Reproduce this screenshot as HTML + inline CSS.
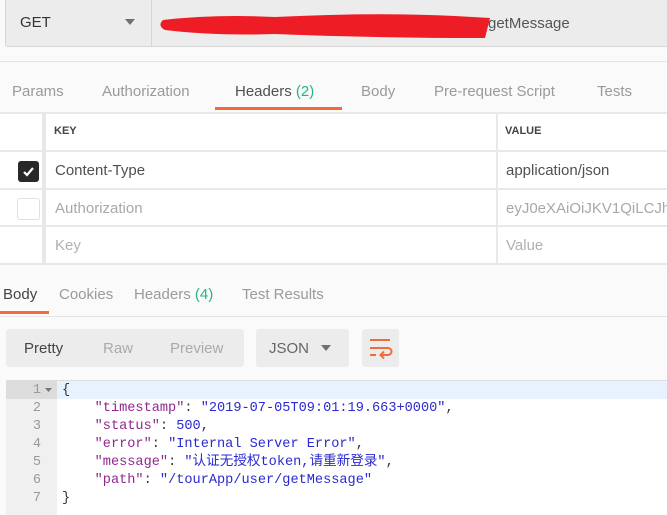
<!DOCTYPE html>
<html><head><meta charset="utf-8"><style>
*{margin:0;padding:0;box-sizing:border-box}
body{width:667px;height:515px;overflow:hidden;background:#fafafa;font-family:"Liberation Sans","Noto Sans CJK SC",sans-serif;position:relative;color:#505050}
.a{position:absolute;white-space:nowrap}
pre.a{white-space:pre}
</style></head><body>
<div class="a" style="left:5px;top:0;width:670px;height:47px;background:#ececec;border:1px solid #d6d6d6;border-top:none;border-radius:0 0 0 3px"></div>
<div class="a" style="left:151px;top:0;width:1px;height:47px;background:#d6d6d6"></div>
<div class="a" style="left:20px;top:14px;font-size:15px;color:#333">GET</div>
<svg class="a" style="left:125px;top:19px" width="10" height="7"><path d="M0 0H10L5 6Z" fill="#707070"/></svg>
<svg class="a" style="left:155px;top:8px" width="340" height="34"><path d="M8 12 Q60 6 120 9 Q220 4 300 8 L335 10 L330 30 Q220 30 120 26 Q60 28 10 22 Q2 18 8 12Z" fill="#ee1c25"/></svg>
<div class="a" style="left:488px;top:15px;font-size:15px;color:#555">getMessage</div>
<div class="a" style="left:0;top:61px;width:667px;height:1px;background:#e4e4e4"></div>
<div class="a" style="left:12px;top:83px;font-size:15px;color:#9a9a9a">Params</div>
<div class="a" style="left:102px;top:83px;font-size:15px;color:#9a9a9a">Authorization</div>
<div class="a" style="left:235px;top:83px;font-size:15px;color:#505050">Headers <span style="color:#26b47f">(2)</span></div>
<div class="a" style="left:361px;top:83px;font-size:15px;color:#9a9a9a">Body</div>
<div class="a" style="left:434px;top:83px;font-size:15px;color:#9a9a9a">Pre-request Script</div>
<div class="a" style="left:597px;top:83px;font-size:15px;color:#9a9a9a">Tests</div>
<div class="a" style="left:215px;top:107px;width:127px;height:3px;background:#f26b3a"></div>
<div class="a" style="left:0;top:112px;width:667px;height:152px;background:#fff"></div>
<div class="a" style="left:0;top:112px;width:667px;height:2px;background:#e8e8e8"></div>
<div class="a" style="left:0;top:150px;width:667px;height:2px;background:#e8e8e8"></div>
<div class="a" style="left:0;top:188px;width:667px;height:2px;background:#e8e8e8"></div>
<div class="a" style="left:0;top:225px;width:667px;height:2px;background:#e8e8e8"></div>
<div class="a" style="left:0;top:263px;width:667px;height:2px;background:#e8e8e8"></div>
<div class="a" style="left:42px;top:112px;width:4px;height:152px;background:#e8e8e8"></div>
<div class="a" style="left:496px;top:112px;width:2px;height:152px;background:#e8e8e8"></div>
<div class="a" style="left:54px;top:125px;font-size:11px;font-weight:bold;color:#444">KEY</div>
<div class="a" style="left:505px;top:125px;font-size:11px;font-weight:bold;color:#444">VALUE</div>
<div class="a" style="left:18px;top:161px;width:21px;height:21px;background:#282828;border-radius:3px"></div>
<svg class="a" style="left:21px;top:164px" width="15" height="15"><path d="M3 8L6 11L12 4" stroke="#fff" stroke-width="2.2" fill="none"/></svg>
<div class="a" style="left:17px;top:198px;width:23px;height:22px;border:1px solid #e0e0e0;border-radius:3px;background:#fff"></div>
<div class="a" style="left:55px;top:162px;font-size:15px;color:#505050">Content-Type</div>
<div class="a" style="left:506px;top:162px;font-size:15px;color:#505050">application/json</div>
<div class="a" style="left:55px;top:200px;font-size:15px;color:#a8a8a8">Authorization</div>
<div class="a" style="left:506px;top:200px;font-size:15px;color:#a8a8a8">eyJ0eXAiOiJKV1QiLCJhb</div>
<div class="a" style="left:55px;top:237px;font-size:15px;color:#b0b0b0">Key</div>
<div class="a" style="left:506px;top:237px;font-size:15px;color:#b0b0b0">Value</div>
<div class="a" style="left:3px;top:286px;font-size:15px;color:#444">Body</div>
<div class="a" style="left:59px;top:286px;font-size:15px;color:#9a9a9a">Cookies</div>
<div class="a" style="left:134px;top:286px;font-size:15px;color:#9a9a9a">Headers <span style="color:#26b47f">(4)</span></div>
<div class="a" style="left:242px;top:286px;font-size:15px;color:#9a9a9a">Test Results</div>
<div class="a" style="left:0;top:316px;width:667px;height:1px;background:#e4e4e4"></div>
<div class="a" style="left:0;top:311px;width:49px;height:3px;background:#f26b3a"></div>
<div class="a" style="left:6px;top:329px;width:238px;height:38px;background:#ececec;border-radius:3px"></div>
<div class="a" style="left:24px;top:340px;font-size:15px;color:#444">Pretty</div>
<div class="a" style="left:103px;top:340px;font-size:15px;color:#aaa">Raw</div>
<div class="a" style="left:170px;top:340px;font-size:15px;color:#aaa">Preview</div>
<div class="a" style="left:256px;top:329px;width:93px;height:38px;background:#ececec;border-radius:3px"></div>
<div class="a" style="left:269px;top:340px;font-size:15px;color:#666">JSON</div>
<svg class="a" style="left:321px;top:345px" width="10" height="7"><path d="M0 0H10L5 6Z" fill="#707070"/></svg>
<div class="a" style="left:362px;top:329px;width:37px;height:38px;background:#ececec;border-radius:3px"></div>
<svg class="a" style="left:368px;top:336px" width="26" height="24"><path d="M2 4H22M2 12H20A3.5 3.5 0 0 1 20 19H13M16 15.5L12.5 19L16 22.5M2 19H8" stroke="#f26b3a" stroke-width="2" fill="none"/></svg>
<div class="a" style="left:6px;top:380px;width:661px;height:135px;background:#fff;border-top:1px solid #ddd"></div>
<div class="a" style="left:6px;top:381px;width:51px;height:134px;background:#f0f0f0"></div>
<div class="a" style="left:6px;top:381px;width:51px;height:18px;background:#dcdcdc"></div>
<div class="a" style="left:57px;top:381px;width:610px;height:18px;background:#e8f2fe"></div>
<pre class="a" style="left:6px;top:382px;width:51px;font-family:'Liberation Mono',monospace;font-size:13.6px;line-height:18px;color:#999;text-align:right;padding-right:16px">1
2
3
4
5
6
7</pre>
<svg class="a" style="left:45px;top:388px" width="7" height="5"><path d="M0 0H7L3.5 4Z" fill="#777"/></svg>
<pre class="a" style="left:62px;top:382px;font-family:'Liberation Mono','Noto Sans CJK SC',monospace;font-size:13.6px;line-height:18px;color:#333">{
    <span style="color:#92278f">"timestamp"</span>: <span style="color:#2a2ad0">"2019-07-05T09:01:19.663+0000"</span>,
    <span style="color:#92278f">"status"</span>: <span style="color:#2a2ad0">500</span>,
    <span style="color:#92278f">"error"</span>: <span style="color:#2a2ad0">"Internal Server Error"</span>,
    <span style="color:#92278f">"message"</span>: <span style="color:#2a2ad0">"认证无授权token,请重新登录"</span>,
    <span style="color:#92278f">"path"</span>: <span style="color:#2a2ad0">"/tourApp/user/getMessage"</span>
}</pre>
</body></html>
